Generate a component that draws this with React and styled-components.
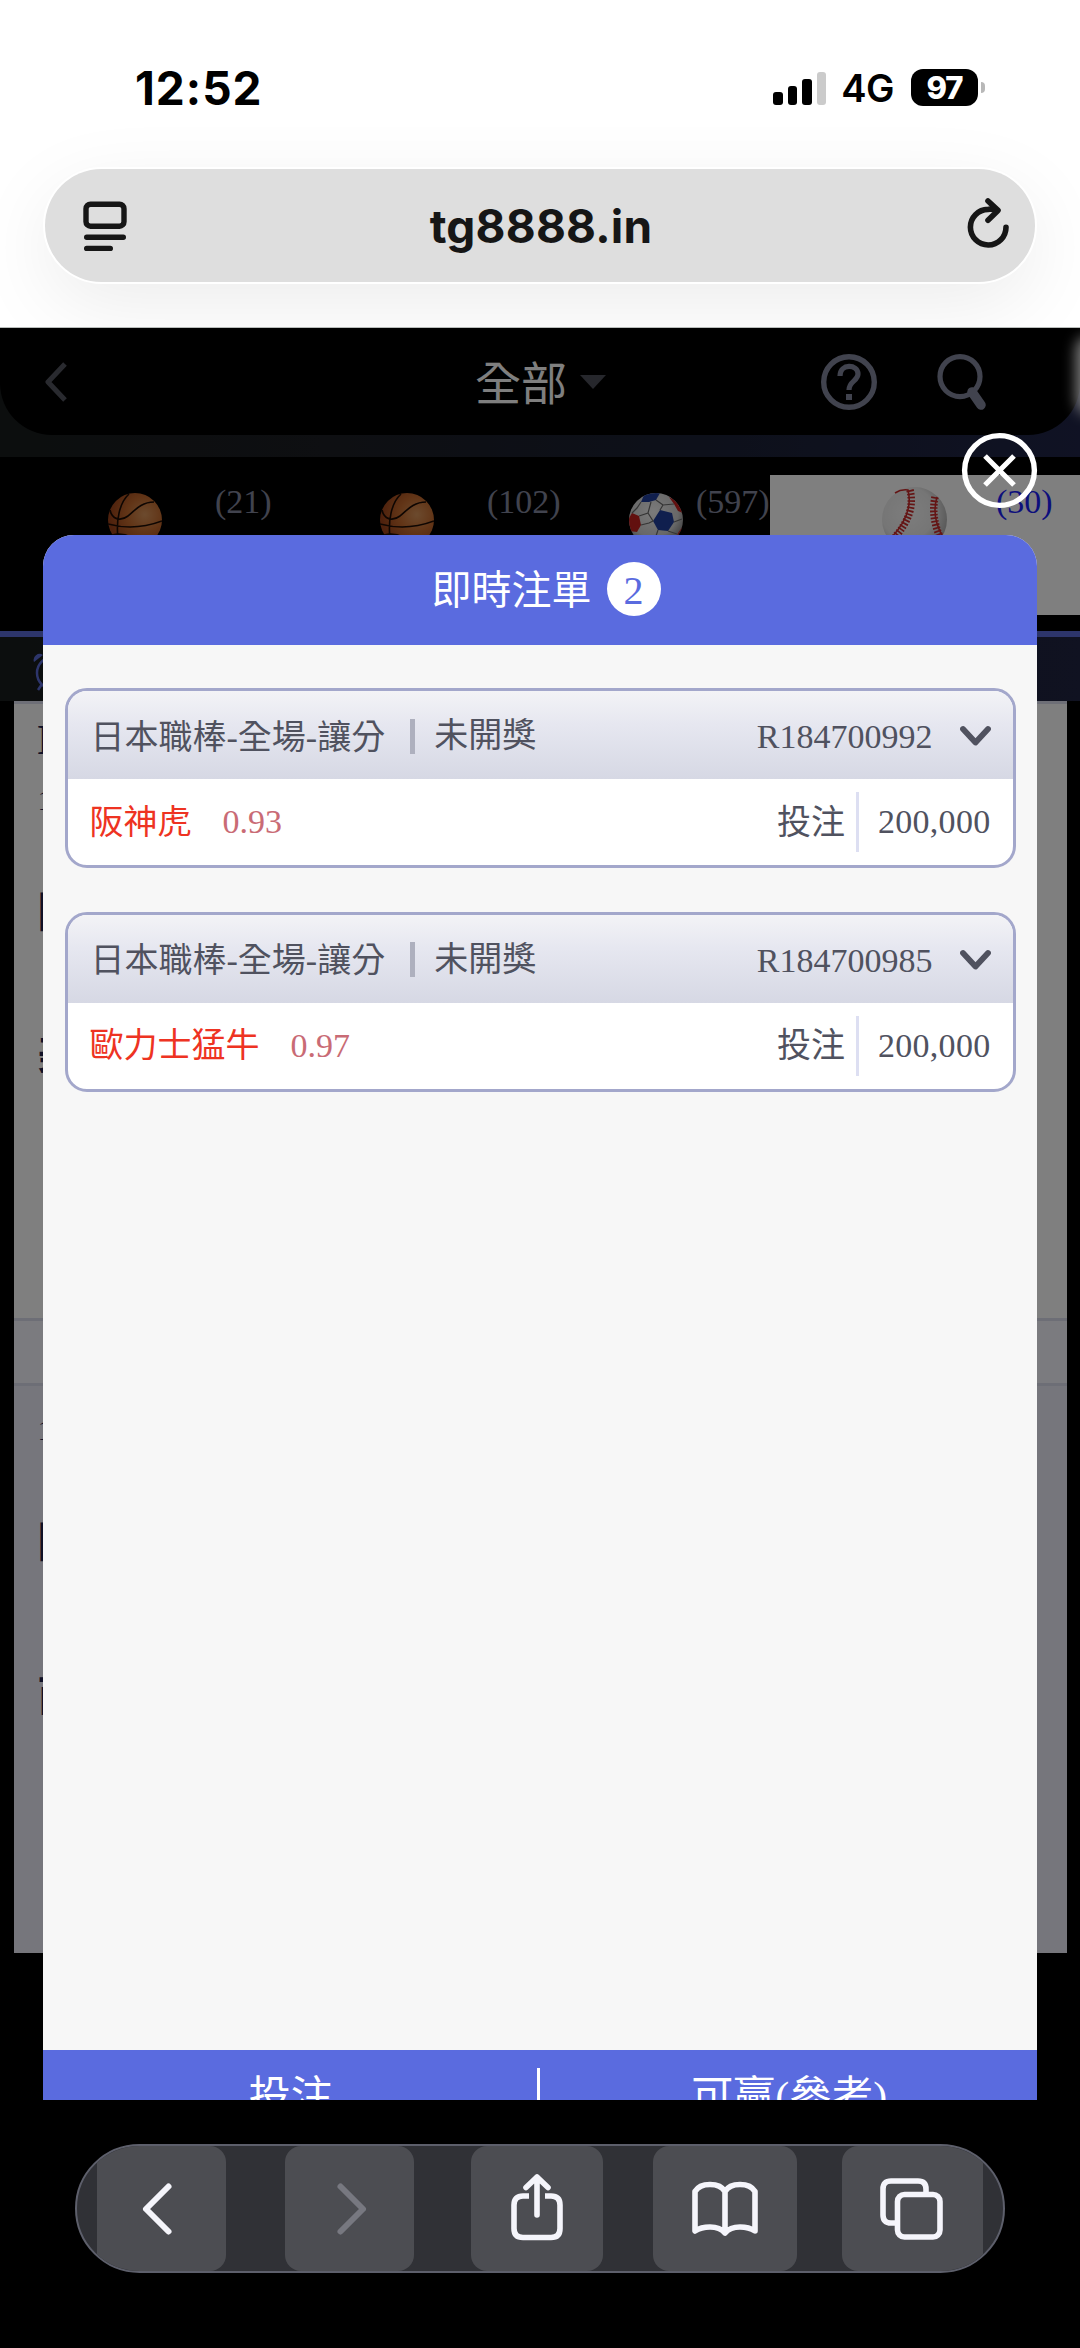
import React from 'react';
import styled, { createGlobalStyle } from 'styled-components';

const GlobalStyle = createGlobalStyle`
  * {
    box-sizing: border-box;
  }

  body {
    margin: 0;
    background: #000;
    font-family: "Liberation Serif", "Noto Sans CJK TC", serif;
    -webkit-font-smoothing: antialiased;
  }

  svg {
    display: block;
  }
`;

const Phone = styled.div`
  display: flex;
  flex-direction: column;
  width: 1080px;
  height: 2348px;
  overflow: hidden;
`;

/* ---------- browser top ---------- */

const BrowserTop = styled.header`
  height: 328px;
  padding: 0 45px;
  background: #fff;
  border-bottom: 1px solid #b9bdbb;
  overflow: hidden;
  font-family: Inter, "Liberation Sans", sans-serif;
`;

const StatusBar = styled.div`
  display: flex;
  justify-content: space-between;
  align-items: center;
  height: 169px;
  padding: 6px 50px 0 90px;
`;

const Clock = styled.div`
  font-size: 46px;
  font-weight: 700;
  line-height: 54px;
  letter-spacing: 1px;
  color: #000;
`;

const StatusIcons = styled.div`
  display: flex;
  align-items: center;
`;

const Signal = styled.div`
  display: flex;
  align-items: flex-end;
  gap: 5px;
  height: 34px;
`;

const SignalBar = styled.span`
  width: 9.5px;
  height: ${(p) => p.$h}px;
  border-radius: 3px;
  background: ${(p) => (p.$off ? '#cbcbcb' : '#000')};
`;

const Network = styled.span`
  margin-left: 15px;
  font-size: 38px;
  font-weight: 600;
  line-height: 40px;
  letter-spacing: -0.5px;
`;

const Battery = styled.span`
  display: flex;
  align-items: center;
  justify-content: center;
  width: 67px;
  height: 37px;
  margin-left: 17px;
  border-radius: 12px;
  background: #000;
  color: #fff;
  font-size: 31px;
  font-weight: 800;
  letter-spacing: -1px;
`;

const BatteryTip = styled.span`
  width: 4px;
  height: 11px;
  margin-left: 3px;
  border-radius: 0 4px 4px 0;
  background: #b8b8b8;
`;

const AddressBar = styled.div`
  display: flex;
  align-items: center;
  justify-content: space-between;
  height: 113px;
  padding: 0 25px 0 37px;
  border-radius: 57px;
  background: #dedede;
  color: #161616;
  box-shadow: 0 0 0 2px #fff, 0 22px 80px rgba(0, 0, 0, 0.08);
`;

const Address = styled.div`
  margin-right: 12px;
  padding-top: 1px;
  font-size: 46px;
  font-weight: 650;
  line-height: 54px;
  letter-spacing: 0.2px;
`;

/* ---------- web page ---------- */

const WebPage = styled.main`
  position: relative;
  height: 1772px;
  overflow: hidden;
  background: #000;
`;

const HeaderBack = styled.div`
  height: 129px;
  background: linear-gradient(90deg, #181c1c, #1c1e24 30%, #1a2032 60%, #202548);
`;

const Header = styled.div`
  display: grid;
  grid-template-columns: 300px 1fr 300px;
  align-items: center;
  height: 107px;
  padding: 0 91px 0 45px;
  border-radius: 0 0 52px 52px;
  background: #000;
`;

const HeaderTitle = styled.div`
  display: flex;
  align-items: center;
  justify-content: center;
  gap: 13px;
  padding-left: 47px;
  font-size: 46px;
  line-height: 60px;
  color: #fff;

  span {
    padding-top: 6px;
  }
`;

const HeaderActions = styled.div`
  display: flex;
  justify-content: flex-end;
  gap: 57px;
`;

const EdgeGlow = styled.div`
  position: absolute;
  top: 12px;
  right: -60px;
  width: 60px;
  height: 70px;
  border-radius: 10px;
  box-shadow: 0 0 14px 4px #fff;
`;

const SportTabs = styled.div`
  display: flex;
  height: 174px;
  padding-top: 18px;
`;

const SportTab = styled.div`
  display: flex;
  align-items: flex-start;
  flex: none;
  width: ${(p) => p.$w}px;
  height: 140px;
  padding-left: ${(p) => p.$pad}px;
  gap: ${(p) => p.$gap}px;
  background: ${(p) => (p.$active ? '#fff' : 'transparent')};
  color: ${(p) => (p.$active ? '#1a1ef8' : '#82869c')};
  font-size: 34px;
  line-height: 38px;

  svg {
    flex: none;
    margin-top: ${(p) => (p.$active ? 12 : 18)}px;
  }

  span {
    margin-top: 8px;
  }
`;

const TimeBar = styled.div`
  height: 70px;
  padding: 16px 0 0 33px;
  border-top: 6px solid #5a6bd6;
  background: linear-gradient(90deg, #181c1c, #202442);
`;

const Matches = styled.div`
  width: 1053px;
  margin-left: 13.5px;
  border-top: 3px solid #dcdeee;
`;

const MatchBlock = styled.div`
  height: ${(p) => p.$h}px;
  padding: ${(p) => p.$top}px 0 0 24px;
  background: ${(p) => p.$bg};
  border-bottom: ${(p) => (p.$line ? '3px solid #dadcec' : 'none')};
  color: #20224e;
`;

const MatchText = styled.div`
  height: ${(p) => p.$h}px;
  font-size: ${(p) => p.$size || 42}px;
  line-height: 44px;
  font-weight: ${(p) => (p.$bold ? 700 : 400)};
`;

/* ---------- modal ---------- */

const Overlay = styled.div`
  position: absolute;
  inset: 0;
  padding: 207px 43px 0;
  background: rgba(0, 0, 0, 0.5);
`;

const CloseButton = styled.button`
  position: absolute;
  top: 104px;
  left: 961px;
  padding: 0;
  border: 0;
  background: none;
`;

const Modal = styled.section`
  display: flex;
  flex-direction: column;
  height: 1620px;
  border-radius: 31px 31px 0 0;
  overflow: hidden;
  background: #f7f7f7;
`;

const ModalTitle = styled.div`
  display: flex;
  align-items: center;
  justify-content: center;
  gap: 15px;
  height: 110px;
  padding: 0 0 3px 12px;
  background: #5a6bdf;
  color: #fff;
  font-size: 40px;
  line-height: 54px;
`;

const TitleText = styled.span`
  padding-top: 5px;
`;

const Count = styled.span`
  width: 54px;
  height: 54px;
  border-radius: 50%;
  background: #fff;
  color: #5a6bdf;
  text-align: center;
  line-height: 58px;
`;

const BetList = styled.div`
  display: flex;
  flex-direction: column;
  gap: 43.5px;
  height: 1405px;
  padding: 43px 21.5px 0;
`;

const BetCard = styled.div`
  height: 180px;
  flex: none;
  border: 3px solid #a3a7cb;
  border-radius: 22px;
  overflow: hidden;
  background: #fff;
  color: #50525f;
  font-size: 34px;
  line-height: 40px;
`;

const BetHead = styled.div`
  display: flex;
  align-items: center;
  height: 88px;
  padding: 2px 21px 0 23px;
  background: linear-gradient(#f3f3f6, #e6e7f0 38%, #d6d8e4);
`;

const League = styled.span`
  padding-top: 3px;
`;

const Bar = styled.span`
  width: 5px;
  height: 35px;
  margin: 0 19px 0 25px;
  background: #aeb0be;
`;

const BetId = styled.span`
  margin-left: auto;
  margin-right: 26px;
  padding-top: 2px;
`;

const BetBody = styled.div`
  display: flex;
  align-items: center;
  height: 86px;
  padding: 0 22px;
`;

const Team = styled.span`
  padding-top: 1px;
  color: #ee3322;
`;

const Odds = styled.span`
  margin-left: 31px;
  color: #c96b75;
`;

const StakeLabel = styled.span`
  margin-left: auto;
  padding: 1px 11px 0 0;
`;

const Stake = styled.span`
  padding-left: 19px;
  border-left: 3px solid #dddff2;
  line-height: 60px;
  letter-spacing: 0.3px;
`;

const ModalFooter = styled.div`
  display: grid;
  grid-template-columns: 1fr 3px 1fr;
  height: 105px;
  background: #5a6bdf;
  color: #fff;
  font-size: 42px;
  line-height: 50px;
  text-align: center;
`;

const FooterCell = styled.div`
  padding-top: 22px;
`;

const FooterLine = styled.div`
  width: 3px;
  height: 60px;
  margin: 18px 0 0 -1.5px;
  background: #fff;
`;

/* ---------- browser toolbar ---------- */

const BrowserBottom = styled.footer`
  flex: 1;
  padding: 44px 75px 0;
  background: #000;
`;

const Toolbar = styled.nav`
  display: flex;
  height: 129px;
  padding: 0 20px;
  border: 2px solid #5d5f6b;
  border-radius: 65px;
  overflow: hidden;
  background: #303136;
`;

const ToolButton = styled.button`
  display: flex;
  align-items: center;
  justify-content: center;
  flex: none;
  width: ${(p) => p.$w}px;
  height: 125px;
  margin-right: ${(p) => p.$gap || 0}px;
  padding: 0;
  border: 0;
  border-radius: ${(p) => p.$radius || '16px'};
  background: #4c4d52;
  color: ${(p) => (p.$off ? '#777880' : '#f5f5fb')};
`;

const Icon = ({ w, h, sw = 6, children }) => (
  <svg
    width={w}
    height={h}
    viewBox={`0 0 ${w} ${h}`}
    fill="none"
    stroke="currentColor"
    strokeWidth={sw}
    strokeLinecap="round"
    strokeLinejoin="round"
  >
    {children}
  </svg>
);

const Basketball = () => (
  <svg width="54" height="54" viewBox="0 0 54 54" fill="none" stroke="#1c0c04" strokeWidth="1.6">
    <defs>
      <radialGradient id="basket" cx="0.68" cy="0.4" r="0.65">
        <stop offset="0" stopColor="#d8955c" />
        <stop offset="0.5" stopColor="#c46a2e" />
        <stop offset="1" stopColor="#9c431a" />
      </radialGradient>
    </defs>
    <circle cx="27" cy="27" r="27" fill="url(#basket)" stroke="none" />
    <path d="M21 1C11 10 8 28 10 46M2 17C4 26 12 29 20 23C29 15 35 9 46 9M0 31C18 36 38 34 54 28M4 42C16 39 26 44 34 53" />
  </svg>
);

const SoccerBall = () => (
  <svg width="54" height="54" viewBox="0 0 54 54">
    <defs>
      <radialGradient id="soccer" cx="0.45" cy="0.35" r="0.65">
        <stop offset="0" stopColor="#f6f6f6" />
        <stop offset="0.7" stopColor="#d0d0d0" />
        <stop offset="1" stopColor="#828282" />
      </radialGradient>
      <clipPath id="ball">
        <circle cx="27" cy="27" r="27" />
      </clipPath>
    </defs>
    <g clipPath="url(#ball)">
      <rect width="54" height="54" fill="url(#soccer)" />
      <path d="M12 9L15 2L21 0H31L27 7L20 9Z" fill="#213f9c" />
      <path d="M31 17L43 20L45 29L39 38L29 37L24 28Z" fill="#213f9c" />
      <path d="M0 25L3 20L10 23L12 32L8 39L0 38Z" fill="#c4201f" />
      <path d="M40 4L48 8L54 20L49 18L45 11ZM49 40L54 33V45L46 49Z" fill="#c4201f" />
      <path d="M12 9L8 15L3 20M27 7L34 12L31 17M10 23L19 20L22 9M19 20L24 28L20 30L12 32M34 12L45 11M45 29L53 26M29 37L26 46M39 38L48 41" fill="none" stroke="#6b6b6b" strokeWidth="1.2" />
    </g>
  </svg>
);

const Baseball = () => (
  <svg width="65" height="65" viewBox="0 0 65 65" fill="none">
    <defs>
      <radialGradient id="base" cx="0.4" cy="0.4" r="0.62">
        <stop offset="0" stopColor="#fafafa" />
        <stop offset="0.65" stopColor="#ececec" />
        <stop offset="1" stopColor="#b4b4b4" />
      </radialGradient>
    </defs>
    <circle cx="32.5" cy="32.5" r="32.5" fill="url(#base)" />
    <g stroke="#c92a2a">
      <path d="M13 6Q19 2 26 3Q32 27 9 51M55 10Q49 30 61 50" strokeWidth="1.6" />
      <path d="M28 3Q34 27 12 51M53 10Q49 30 58 50" strokeWidth="7.5" strokeDasharray="1.7 1.7" />
    </g>
  </svg>
);

const bets = [
  { id: 'R184700992', league: '日本職棒-全場-讓分', team: '阪神虎', odds: '0.93', stake: '200,000' },
  { id: 'R184700985', league: '日本職棒-全場-讓分', team: '歐力士猛牛', odds: '0.97', stake: '200,000' },
];

function Bet({ bet }) {
  return (
    <BetCard>
      <BetHead>
        <League>{bet.league}</League>
        <Bar />
        <span>未開獎</span>
        <BetId>{bet.id}</BetId>
        <Icon w={33} h={24} sw={5.8}>
          <path d="M4 5L16.500 18.500L29 5" />
        </Icon>
      </BetHead>
      <BetBody>
        <Team>{bet.team}</Team>
        <Odds>{bet.odds}</Odds>
        <StakeLabel>投注</StakeLabel>
        <Stake>{bet.stake}</Stake>
      </BetBody>
    </BetCard>
  );
}

function App() {
  return (
    <Phone>
      <GlobalStyle />
      <BrowserTop>
        <StatusBar>
          <Clock>12:52</Clock>
          <StatusIcons>
            <Signal>
              <SignalBar $h={13} />
              <SignalBar $h={19} />
              <SignalBar $h={26} />
              <SignalBar $h={33} $off />
            </Signal>
            <Network>4G</Network>
            <Battery>97</Battery>
            <BatteryTip />
          </StatusIcons>
        </StatusBar>
        <AddressBar>
          <Icon w={46} h={52} sw={5.4}>
            <rect x="4" y="4.2" width="38" height="22" rx="4.5" />
            <path d="M4.7 37.2H41.3M4.7 48.4H28.3" />
          </Icon>
          <Address>tg8888.in</Address>
          <Icon w={44} h={56} sw={5.6}>
            <path d="M40 29.2A17.8 17.8 0 1 1 22 11.400Q27 11 32 12.400M22 3L32 12.400L22 22.200" />
          </Icon>
        </AddressBar>
      </BrowserTop>

      <WebPage>
        <HeaderBack>
          <Header>
            <Icon w={22} h={42} sw={5}>
              <path d="M20 3L3 21L20 39" stroke="#53555f" strokeLinecap="butt" />
            </Icon>
            <HeaderTitle>
              <span>全部</span>
              <svg width="26" height="14" viewBox="0 0 26 14">
                <path d="M0 0H26L13 14Z" fill="#4c4e58" />
              </svg>
            </HeaderTitle>
            <HeaderActions>
              <svg width="58" height="58" viewBox="0 0 58 58" fill="none" stroke="#82869c">
                <circle cx="29" cy="29" r="25.3" strokeWidth="5.4" />
                <path d="M20 23C20 10 38 11 38 21C38 28 29 28 29 37" strokeWidth="5.2" />
                <path d="M29 41V47" strokeWidth="6" />
              </svg>
              <svg width="54" height="58" viewBox="0 0 54 58" fill="none" stroke="#82869c">
                <circle cx="25" cy="23.6" r="20" strokeWidth="5.2" />
                <path d="M37 39L46 52" strokeWidth="9.5" strokeLinecap="round" />
              </svg>
            </HeaderActions>
          </Header>
        </HeaderBack>
        <EdgeGlow />
        <SportTabs>
          <SportTab $w={272} $pad={108} $gap={53}>
            <Basketball />
            <span>(21)</span>
          </SportTab>
          <SportTab $w={272} $pad={108} $gap={53}>
            <Basketball />
            <span>(102)</span>
          </SportTab>
          <SportTab $w={226} $pad={85} $gap={13}>
            <SoccerBall />
            <span>(597)</span>
          </SportTab>
          <SportTab $w={310} $pad={112} $gap={49} $active>
            <Baseball />
            <span>(30)</span>
          </SportTab>
        </SportTabs>
        <TimeBar>
          <svg width="40" height="40" viewBox="0 0 40 40" fill="none" stroke="#5a6bd6" strokeWidth="2.5">
            <circle cx="20" cy="20" r="16" />
            <path d="M1 9A6 6 0 0 1 10 2Z" fill="#5a6bd6" stroke="none" />
            <path d="M9 31L5 37" />
          </svg>
        </TimeBar>
        <Matches>
          <MatchBlock $h={617} $top={14} $bg="#ffffff" $line>
            <MatchText $h={60} $bold>N</MatchText>
            <MatchText $h={113} $size={30}>1</MatchText>
            <MatchText $h={142} $bold>國</MatchText>
            <MatchText $h={44} $bold>美</MatchText>
          </MatchBlock>
          <MatchBlock $h={65} $top={0} $bg="#f6f7ff" $line />
          <MatchBlock $h={567} $top={22} $bg="#ecedf8">
            <MatchText $h={113} $size={30}>1</MatchText>
            <MatchText $h={154} $bold>國</MatchText>
            <MatchText $h={44} $bold>西</MatchText>
          </MatchBlock>
        </Matches>

        <Overlay>
          <Modal>
            <ModalTitle>
              <TitleText>即時注單</TitleText>
              <Count>2</Count>
            </ModalTitle>
            <BetList>
              {bets.map((bet) => (
                <Bet key={bet.id} bet={bet} />
              ))}
            </BetList>
            <ModalFooter>
              <FooterCell>投注</FooterCell>
              <FooterLine />
              <FooterCell>可贏(參考)</FooterCell>
            </ModalFooter>
          </Modal>
          <CloseButton aria-label="close">
            <svg width="77" height="77" viewBox="0 0 77 77" fill="none" stroke="#fff">
              <circle cx="38.5" cy="38.5" r="34.9" strokeWidth="5.4" />
              <path d="M24 24L53 53M53 24L24 53" strokeWidth="5.2" />
            </svg>
          </CloseButton>
        </Overlay>
      </WebPage>

      <BrowserBottom>
        <Toolbar>
          <ToolButton $w={128.5} $gap={59.5} $radius="0 16px 16px 0">
            <Icon w={40} h={54}>
              <path d="M27.500 4.500L5 27L27.500 49.500" />
            </Icon>
          </ToolButton>
          <ToolButton $w={128.5} $gap={57.5} $off>
            <Icon w={40} h={54}>
              <path d="M11.500 4.500L34 27L11.500 49.500" />
            </Icon>
          </ToolButton>
          <ToolButton $w={131.5} $gap={50.5}>
            <Icon w={54} h={70} sw={5.6}>
              <path d="M19 22H13Q4 22 4 31V54.500Q4 63.500 13 63.500H41Q50 63.500 50 54.500V31Q50 22 41 22H35" strokeLinecap="butt" />
              <path d="M27 41V3M16 13.500L27 3L38 13.500" />
            </Icon>
          </ToolButton>
          <ToolButton $w={143.5} $gap={45.5}>
            <Icon w={68} h={58} sw={5.6}>
              <path d="M4 51V11.500Q8 4.500 19 4.500Q30 4.500 34 11.500Q38 4.500 49 4.500Q60 4.500 64 11.500V51Q58 47 49 47Q39 47 34 53Q29 47 19 47Q10 47 4 51ZM34 11.500V53" />
            </Icon>
          </ToolButton>
          <ToolButton $w={141} $radius="16px 0 0 16px">
            <Icon w={66} h={66} sw={5.6}>
              <path d="M17 47H11Q3 47 3 39V13Q3 5 11 5H38Q46 5 46 13V16" strokeLinecap="butt" />
              <rect x="17.500" y="18.500" width="42.500" height="42.500" rx="7" />
            </Icon>
          </ToolButton>
        </Toolbar>
      </BrowserBottom>
    </Phone>
  );
}

export default App;
